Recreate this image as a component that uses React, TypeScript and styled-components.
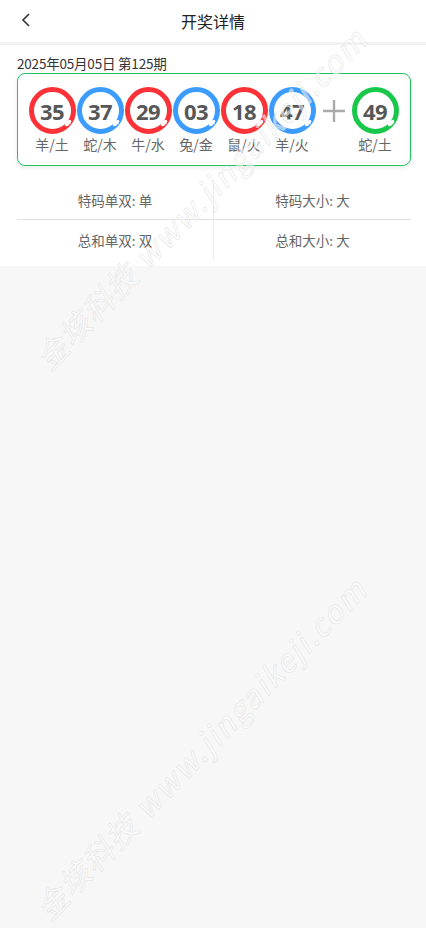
import React from 'react';
import styled, { createGlobalStyle } from 'styled-components';

const GlobalStyle = createGlobalStyle`
  html, body {
    margin: 0;
    padding: 0;
    background: #f7f7f7;
    font-family: "Noto Sans CJK SC", "Noto Sans", sans-serif;
  }
`;

const Page = styled.div`
  position: relative;
  width: 100%;
  min-height: 928px;
  overflow: hidden;
  background: #f7f7f7;
`;

const Header = styled.header`
  height: 42px;
  display: flex;
  align-items: center;
  justify-content: center;
  position: relative;
  background: #ffffff;
  border-bottom: 3px solid #f3f3f3;
`;

const BackButton = styled.button`
  position: absolute;
  left: 14px;
  top: 8px;
  width: 24px;
  height: 24px;
  padding: 0;
  border: none;
  background: none;
  display: flex;
  align-items: center;
  justify-content: center;
`;

const Title = styled.h1`
  margin: 0;
  font-size: 16px;
  font-weight: 400;
  color: #222;
`;

const Section = styled.section`
  background: #ffffff;
  padding: 8px 15px 7px 17px;
`;

const DateLine = styled.div`
  font-size: 13.5px;
  line-height: 20px;
  color: #333;
  letter-spacing: -0.2px;
`;

const Card = styled.div`
  border: 1px solid #22c45e;
  border-radius: 8px;
  box-shadow: 0 2px 5px rgba(0, 0, 0, 0.08);
  padding: 13px 0 11px 11px;
  display: flex;
  align-items: flex-start;
`;

const BallItem = styled.div`
  width: 46px;
  margin-right: 2px;
  display: flex;
  flex-direction: column;
  align-items: center;
`;

const Ball = styled.div<{ $color: string }>`
  position: relative;
  width: 47px;
  height: 47px;
  box-sizing: border-box;
  border-radius: 50%;
  border: 5px solid ${p => p.$color};
  background: #ffffff;
  display: flex;
  align-items: center;
  justify-content: center;
  font-family: "Open Sans", "Noto Sans", sans-serif;
  font-weight: 700;
  font-size: 22px;
  color: #575757;
  letter-spacing: -0.5px;

  &::after {
    content: '';
    position: absolute;
    right: -1px;
    bottom: 4px;
    width: 8px;
    height: 4px;
    border-radius: 50%;
    background: #ffffff;
    transform: rotate(-45deg);
  }
`;

const BallLabel = styled.div`
  font-size: 14px;
  line-height: 20px;
  color: #666;
`;

const Plus = styled.div`
  width: 33px;
  height: 47px;
  margin-right: 2px;
  display: flex;
  align-items: center;
  justify-content: center;
`;

const Grid = styled.div`
  margin-top: 14px;
  display: grid;
  grid-template-columns: 1fr 1fr;
`;

const Cell = styled.div<{ $top?: boolean; $left?: boolean }>`
  height: 39px;
  display: flex;
  align-items: center;
  justify-content: center;
  font-size: 13.5px;
  color: #666;
  border-bottom: ${p => (p.$top ? '1px solid #e2e2e2' : 'none')};
  border-right: ${p => (p.$left ? '1px solid #ececec' : 'none')};
`;

const Watermark = styled.div<{ $top: number }>`
  position: absolute;
  left: -70px;
  top: ${p => p.$top}px;
  width: 540px;
  text-align: center;
  transform: rotate(-46deg);
  font-size: 31px;
  font-style: italic;
  white-space: nowrap;
  color: rgba(255, 255, 255, 0.5);
  -webkit-text-stroke: 0.5px #e2e2e2;
  pointer-events: none;
  letter-spacing: 2px;
`;

type BallData = { num: string; color: string; label: string };

const RED = '#fb3338';
const BLUE = '#3c9bff';
const GREEN = '#19c84b';

const balls: BallData[] = [
  { num: '35', color: RED, label: '羊/土' },
  { num: '37', color: BLUE, label: '蛇/木' },
  { num: '29', color: RED, label: '牛/水' },
  { num: '03', color: BLUE, label: '兔/金' },
  { num: '18', color: RED, label: '鼠/火' },
  { num: '47', color: BLUE, label: '羊/火' },
];

const special: BallData = { num: '49', color: GREEN, label: '蛇/土' };

const BallView = ({ b }: { b: BallData }) => (
  <BallItem>
    <Ball $color={b.color}>{b.num}</Ball>
    <BallLabel>{b.label}</BallLabel>
  </BallItem>
);

export default function App() {
  return (
    <Page>
      <GlobalStyle />
      <Header>
        <BackButton aria-label="back">
          <svg width="12" height="16" viewBox="0 0 12 16">
            <path d="M9 2 L3 8 L9 14" fill="none" stroke="#333" strokeWidth="1.6" />
          </svg>
        </BackButton>
        <Title>开奖详情</Title>
      </Header>
      <Section>
        <DateLine>2025年05月05日 第125期</DateLine>
        <Card>
          {balls.map(b => (
            <BallView key={b.num} b={b} />
          ))}
          <Plus>
            <svg width="24" height="24" viewBox="0 0 24 24">
              <path d="M12 1 V23 M1 12 H23" stroke="#aaa" strokeWidth="2.4" />
            </svg>
          </Plus>
          <BallView b={special} />
        </Card>
        <Grid>
          <Cell $top $left>特码单双: 单</Cell>
          <Cell $top>特码大小: 大</Cell>
          <Cell $left>总和单双: 双</Cell>
          <Cell>总和大小: 大</Cell>
        </Grid>
      </Section>
      <Watermark $top={175}>金垓科技 www.jingaikeji.com</Watermark>
      <Watermark $top={725}>金垓科技 www.jingaikeji.com</Watermark>
    </Page>
  );
}
